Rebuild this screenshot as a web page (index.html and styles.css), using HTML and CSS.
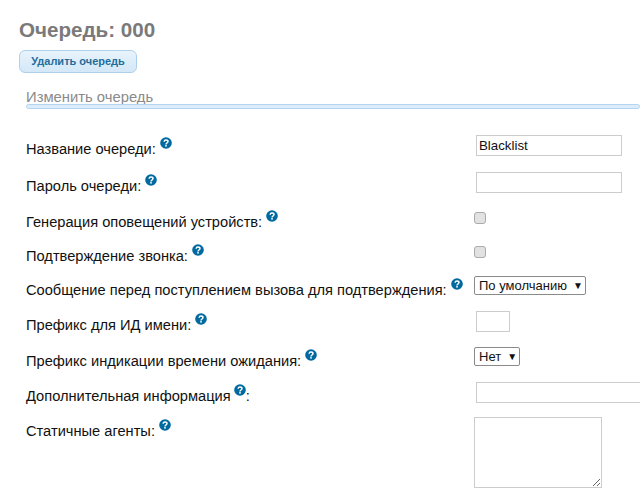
FILE: index.html
```html
<!DOCTYPE html>
<html lang="ru">
<head>
<meta charset="utf-8">
<title>Очередь</title>
<link rel="stylesheet" href="styles.css">
</head>
<body>
<svg class="defs" width="0" height="0"><symbol id="help" viewBox="0 0 12 12"><circle cx="6" cy="6" r="5.8" fill="#00699f"/><path d="M4.1 4.7C4.2 3.5 5 3 6 3c1.2 0 2 .7 2 1.6 0 1.4-2 1.4-2 2.8" fill="none" stroke="#fff" stroke-width="1.5"/><rect x="5.2" y="8.1" width="1.6" height="1.5" fill="#fff"/></symbol></svg>
<h1 class="title">Очередь: 000</h1>
<button class="delete" type="button">Удалить очередь</button>
<h2 class="section">Изменить очередь</h2>
<form class="form">
  <div class="row h37"><label>Название очереди:</label><svg class="help"><use href="#help"/></svg><input class="text" type="text" value="Blacklist"></div>
  <div class="row h36"><label>Пароль очереди:</label><svg class="help"><use href="#help"/></svg><input class="text" type="text"></div>
  <div class="row h34"><label>Генерация оповещений устройств:</label><svg class="help"><use href="#help"/></svg><input class="check" type="checkbox"></div>
  <div class="row h34"><label>Подтверждение звонка:</label><svg class="help"><use href="#help"/></svg><input class="check" type="checkbox"></div>
  <div class="row h35"><label>Сообщение перед поступлением вызова для подтверждения:</label><svg class="help"><use href="#help"/></svg><span class="select">По умолчанию<i>▼</i></span></div>
  <div class="row h36"><label>Префикс для ИД имени:</label><svg class="help"><use href="#help"/></svg><input class="text short" type="text"></div>
  <div class="row h35"><label>Префикс индикации времени ожидания:</label><svg class="help"><use href="#help"/></svg><span class="select">Нет<i>▼</i></span></div>
  <div class="row h35"><label>Дополнительная информация</label><svg class="help mid"><use href="#help"/></svg><label>:</label><input class="text long" type="text"></div>
  <div class="row h35"><label>Статичные агенты:</label><svg class="help"><use href="#help"/></svg><textarea class="area"></textarea></div>
</form>
</body>
</html>
```
FILE: styles.css
```css
html, body { margin: 0; padding: 0; overflow: hidden; background: #fff; }
body { width: 640px; height: 501px; font-family: "Liberation Sans", Arial, sans-serif; font-size: 14.65px; color: #111; }
.defs { position: absolute; }
.title { margin: 0; padding: 18px 0 0 19px; height: 32px; font-size: 20.6px; line-height: 24px; font-weight: 700; color: #7a7a7a; }
.delete { display: block; margin: 0 0 0 19px; width: 118px; height: 23px; padding: 0; border: 1px solid #aed0ea; border-radius: 6px; background: linear-gradient(#e8f3fc, #d3e8f8); color: #1f6d9c; font: 700 11px/21px "Liberation Sans", Arial, sans-serif; }
.section { margin: 12px 0 0 26px; height: 24px; font-size: 14.8px; line-height: 24px; font-weight: 400; color: #8a8a8a; position: relative; }
.section::after { content: ""; position: absolute; left: 0; right: 0; top: 19px; height: 3px; border: 1px solid #b3d5f2; border-radius: 3px; background: #dcecfa; }
.form { padding: 26px 0 0 26px; }
.row { display: flex; align-items: flex-start; position: relative; box-sizing: border-box; }
.h34 { height: 34px; }
.h35 { height: 35px; }
.h36 { height: 36px; }
.h37 { height: 37px; }
.row label { margin-top: 6px; line-height: 17px; white-space: nowrap; }
.help { width: 12px; height: 12px; margin: 2px 0 0 4px; flex: none; }
.help.mid { margin-left: 3px; margin-right: 0; }
.text, .check, .select, .area { position: absolute; box-sizing: border-box; }
.text { left: 450px; top: 0; width: 146px; height: 21px; border: 1px solid #ccc; padding: 0 2px; font: 13.3px "Liberation Sans", Arial, sans-serif; color: #111; border-radius: 0; outline: 0; }
.short { width: 34px; }
.long { width: 180px; }
.check { left: 448px; top: 4px; width: 12px; height: 12px; margin: 0; appearance: none; background: #e2e2e2; border: 1px solid #aaa; border-radius: 3px; }
.select { left: 448px; top: 0; height: 19px; padding: 0 5px 0 4px; border: 1px solid #8a8a8a; border-radius: 2px; background: #fff; font-size: 13px; line-height: 17px; white-space: nowrap; display: flex; color: #111; }
.select i { font-style: normal; font-size: 10px; width: 7px; margin-left: 6px; color: #111; }
.area { left: 448px; top: 0; width: 128px; height: 71px; border: 1px solid #ccc; margin: 0; outline: 0; }
```
